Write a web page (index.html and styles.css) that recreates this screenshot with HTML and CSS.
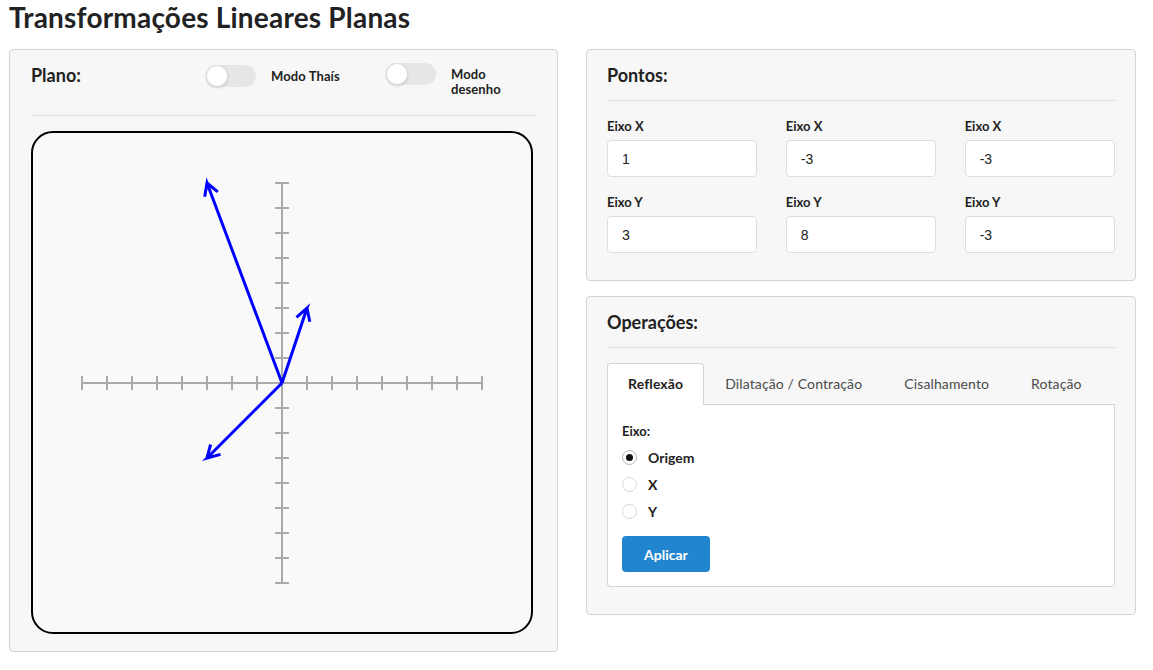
FILE: index.html
```html
<!DOCTYPE html>
<html lang="pt-BR">
<head>
<meta charset="utf-8">
<title>Transformações Lineares Planas</title>
<link rel="stylesheet" href="styles.css">
</head>
<body>
<div class="page">
  <h1 class="title">Transformações Lineares Planas</h1>
  <div class="layout">
    <section class="card plane-card">
      <div class="plane-head">
        <h3 class="card-title plane-title">Plano:</h3>
        <div class="toggle-item toggle-first">
          <span class="toggle"><span class="knob"></span></span>
          <span class="toggle-label">Modo Thaís</span>
        </div>
        <div class="toggle-item">
          <span class="toggle"><span class="knob"></span></span>
          <span class="toggle-label narrow">Modo desenho</span>
        </div>
      </div>
      <div class="canvas-box">
        <svg class="plane" width="498" height="499" viewBox="0 0 498 499" xmlns="http://www.w3.org/2000/svg">
          <g stroke="#aaaaaa" stroke-width="2" fill="none">
            <path d="M49 250H449"/>
            <path d="M249 50V450"/>
            <path d="M49 243V257M74 243V257M99 243V257M124 243V257M149 243V257M174 243V257M199 243V257M224 243V257M249 243V257M274 243V257M299 243V257M324 243V257M349 243V257M374 243V257M399 243V257M424 243V257M449 243V257"/>
            <path d="M242 50H256M242 75H256M242 100H256M242 125H256M242 150H256M242 175H256M242 200H256M242 225H256M242 250H256M242 275H256M242 300H256M242 325H256M242 350H256M242 375H256M242 400H256M242 425H256M242 450H256"/>
          </g>
          <g stroke="#0000ff" stroke-width="3" fill="none" stroke-linejoin="miter">
            <path d="M249 250L274 175L263.5 184.3M274 175L276.8 188.7"/>
            <path d="M249 250L174 50L171.7 63.8M174 50L184.8 58.9"/>
            <path d="M249 250L174 325L187.5 321.4M174 325L177.6 311.5"/>
          </g>
        </svg>
      </div>
    </section>

    <div class="side">
      <section class="card">
        <h3 class="card-title card-head">Pontos:</h3>
        <div class="fields">
          <div class="field"><label class="field-label">Eixo X</label><input class="field-input" type="text" value="1"></div>
          <div class="field"><label class="field-label">Eixo X</label><input class="field-input" type="text" value="-3"></div>
          <div class="field"><label class="field-label">Eixo X</label><input class="field-input" type="text" value="-3"></div>
          <div class="field"><label class="field-label">Eixo Y</label><input class="field-input" type="text" value="3"></div>
          <div class="field"><label class="field-label">Eixo Y</label><input class="field-input" type="text" value="8"></div>
          <div class="field"><label class="field-label">Eixo Y</label><input class="field-input" type="text" value="-3"></div>
        </div>
      </section>

      <section class="card ops-card">
        <h3 class="card-title card-head">Operações:</h3>
        <div class="tabs">
          <span class="tab active">Reflexão</span>
          <span class="tab">Dilatação / Contração</span>
          <span class="tab">Cisalhamento</span>
          <span class="tab">Rotação</span>
        </div>
        <div class="panel">
          <div class="panel-label">Eixo:</div>
          <div class="radio-row"><span class="radio checked"><span class="dot"></span></span><span class="radio-label">Origem</span></div>
          <div class="radio-row"><span class="radio"></span><span class="radio-label">X</span></div>
          <div class="radio-row"><span class="radio"></span><span class="radio-label">Y</span></div>
          <button class="btn-primary" type="button">Aplicar</button>
        </div>
      </section>
    </div>
  </div>
</div>
</body>
</html>
```
FILE: styles.css
```css
* { box-sizing: border-box; }

html, body {
  margin: 0;
  padding: 0;
  background: #ffffff;
}

body {
  font-family: Lato, "Open Sans", "Liberation Sans", sans-serif;
  font-size: 14px;
  color: rgba(0, 0, 0, 0.87);
}

.page {
  padding: 0 9px;
}

.title {
  margin: 0 0 15px 0;
  font-size: 28px;
  line-height: 34px;
  font-weight: 700;
  letter-spacing: 0.2px;
  color: #222222;
}

.layout {
  display: grid;
  grid-template-columns: 549px 550px;
  column-gap: 28px;
  align-items: start;
}

.card {
  background: #f7f7f7;
  border: 1px solid #d4d4d5;
  border-radius: 4px;
  padding: 0 20px 27px 20px;
}

.plane-card {
  padding: 0 20px 17px 21px;
}

.card-title {
  margin: 0;
  font-size: 18px;
  line-height: 24px;
  font-weight: 700;
  color: #222222;
}

.card-head {
  padding: 13px 0 13px 0;
  border-bottom: 1px solid #dcdcdc;
}

.plane-head {
  display: flex;
  align-items: flex-start;
  padding: 13px 0 18px 0;
  border-bottom: 1px solid #dcdcdc;
}

.plane-title {
  width: 175px;
  flex: none;
}

.toggle-item {
  display: flex;
  align-items: flex-start;
  gap: 15px;
}

.toggle-first {
  width: 180px;
  flex: none;
  margin-top: 2px;
}

.toggle {
  display: flex;
  width: 50px;
  height: 22px;
  border-radius: 11px;
  background: #e6e6e6;
  flex: none;
}

.knob {
  width: 22px;
  height: 22px;
  border-radius: 50%;
  background: #ffffff;
  box-shadow: 0 1px 2px 0 rgba(34, 36, 38, 0.18), inset 0 0 0 1px rgba(34, 36, 38, 0.15);
}

.toggle-label {
  padding-top: 4px;
  font-size: 13px;
  line-height: 15px;
  font-weight: 700;
  letter-spacing: 0.1px;
  color: #222222;
}

.toggle-label.narrow {
  max-width: 60px;
}

.canvas-box {
  margin-top: 15px;
  width: 502px;
  border: 2px solid #000000;
  border-radius: 22px;
  background: #f9f9f9;
  overflow: hidden;
}

.plane {
  display: block;
}

.side {
  display: flex;
  flex-direction: column;
  gap: 15px;
}

.fields {
  display: grid;
  grid-template-columns: repeat(3, 1fr);
  column-gap: 28.5px;
  row-gap: 17px;
  margin-top: 17px;
}

.field {
  display: flex;
  flex-direction: column;
}

.field-label {
  font-size: 13px;
  line-height: 16px;
  font-weight: 700;
  color: #222222;
  margin-bottom: 6px;
}

.field-input {
  height: 37px;
  width: 100%;
  border: 1px solid #dedede;
  border-radius: 4px;
  background: #ffffff;
  padding: 0 14px;
  font-family: "Liberation Sans", Arial, sans-serif;
  font-size: 14px;
  color: #222222;
  outline: none;
}

.tabs {
  display: flex;
  margin-top: 15px;
  border-bottom: 1px solid #d4d4d5;
}

.tab {
  padding: 13px 20px;
  font-size: 14px;
  line-height: 14px;
  letter-spacing: 0.12px;
  color: #4a4a4a;
  border: 1px solid transparent;
  border-bottom: none;
  border-radius: 4px 4px 0 0;
}

.tab.active {
  background: #ffffff;
  border-color: #d4d4d5;
  color: #1e1e1e;
  font-weight: 700;
  margin-bottom: -1px;
  padding-bottom: 14px;
}

.panel {
  background: #ffffff;
  border: 1px solid #d4d4d5;
  border-top: none;
  border-radius: 0 0 4px 4px;
  padding: 18px 14px 14px 14px;
  display: flex;
  flex-direction: column;
  align-items: flex-start;
}

.panel-label {
  font-size: 13px;
  line-height: 16px;
  font-weight: 700;
  color: #222222;
  margin-bottom: 9.5px;
}

.radio-row {
  display: flex;
  align-items: center;
  height: 17px;
  margin-bottom: 10px;
}

.radio {
  width: 15px;
  height: 15px;
  border-radius: 50%;
  border: 1px solid #d8d8d8;
  background: #ffffff;
  display: flex;
  align-items: center;
  justify-content: center;
  flex: none;
}

.radio.checked {
  border-color: #b5b5b5;
}

.dot {
  width: 7px;
  height: 7px;
  border-radius: 50%;
  background: #111111;
}

.radio-label {
  margin-left: 11px;
  font-size: 14px;
  line-height: 17px;
  font-weight: 700;
  color: #222222;
}

.btn-primary {
  margin-top: 6.5px;
  height: 36px;
  padding: 0 22px;
  border: none;
  border-radius: 4px;
  background: #2185d0;
  color: #ffffff;
  font-family: Lato, "Open Sans", "Liberation Sans", sans-serif;
  font-size: 14px;
  font-weight: 700;
  cursor: pointer;
}
```
